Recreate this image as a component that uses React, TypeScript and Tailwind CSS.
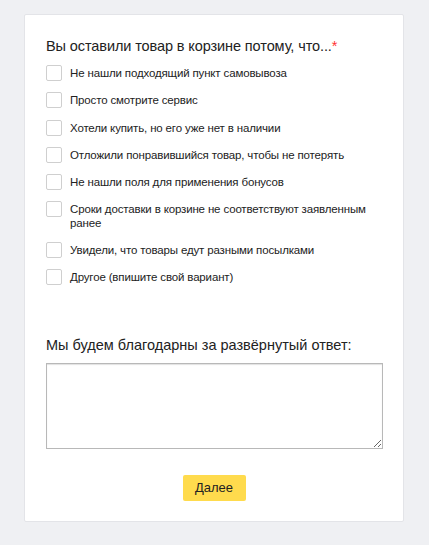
import React from 'react';

const options = [
  'Не нашли подходящий пункт самовывоза',
  'Просто смотрите сервис',
  'Хотели купить, но его уже нет в наличии',
  'Отложили понравившийся товар, чтобы не потерять',
  'Не нашли поля для применения бонусов',
  'Сроки доставки в корзине не соответствуют заявленным ранее',
  'Увидели, что товары едут разными посылками',
  'Другое (впишите свой вариант)',
];

const App: React.FC = () => {
  return (
    <div className="min-h-[545px] w-full bg-[#eff0f3] pt-[14px] pl-[24px] pr-[25px] pb-[23px] font-['Liberation_Sans',Arial,sans-serif] text-[#222]">
      <div className="bg-white border border-[#e3e4e8] rounded-[2px] pl-[21px] pr-[20px] pt-[22px] pb-[20px]">
        <div className="text-[14.5px] leading-[18px] tracking-[-0.1px] text-[#222]">
          Вы оставили товар в корзине потому, что...<span className="text-[#f33]">*</span>
        </div>
        <div className="mt-[10px] flex flex-col gap-[11.25px]">
          {options.map((o) => (
            <label key={o} className="flex items-start gap-[8px] cursor-pointer">
              <span className="shrink-0 w-[16px] h-[16px] border border-[#cfcfcf] rounded-[2px] bg-white" />
              <span className="text-[11.5px] leading-[14px] tracking-[-0.15px] pt-[1px]">{o}</span>
            </label>
          ))}
        </div>
        <div className="mt-[51px] text-[14.5px] leading-[18px]">Мы будем благодарны за развёрнутый ответ:</div>
        <textarea className="mt-[9px] block w-[337px] h-[86px] border border-[#b8b8b8] shadow-[inset_0_1px_1px_rgba(0,0,0,0.12)] outline-none resize" />
        <div className="mt-[26px] flex justify-center pr-[1px]">
          <button className="w-[63px] h-[26px] bg-[#ffdb4d] rounded-[2px] text-[13px] text-[#222]">Далее</button>
        </div>
      </div>
    </div>
  );
};

export default App;
